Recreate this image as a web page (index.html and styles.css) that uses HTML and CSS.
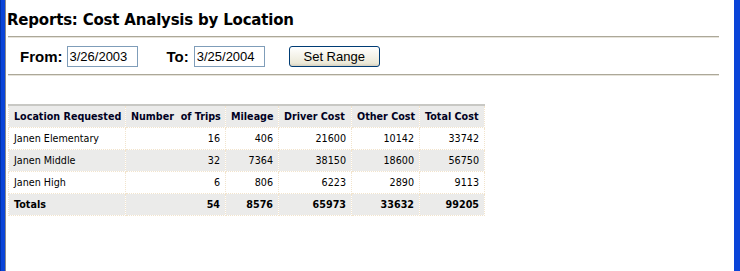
FILE: index.html
```html
<!DOCTYPE html>
<html>
<head>
<meta charset="utf-8">
<link rel="stylesheet" href="styles.css">
</head>
<body>
<div class="frame">
  <div class="page">
    <h1 class="title">Reports: Cost Analysis by Location</h1>
    <div class="rule"></div>
    <form class="range">
      <label class="lbl">From:</label>
      <input class="date" type="text" value="3/26/2003">
      <label class="lbl to">To:</label>
      <input class="date" type="text" value="3/25/2004">
      <button class="btn" type="button">Set Range</button>
    </form>
    <div class="rule"></div>
    <table class="report">
      <colgroup>
        <col class="c1"><col class="c2"><col class="c3"><col class="c4"><col class="c5"><col class="c6">
      </colgroup>
      <thead>
        <tr>
          <th>Location Requested</th>
          <th>Number&nbsp; of Trips</th>
          <th>Mileage</th>
          <th>Driver Cost</th>
          <th>Other Cost</th>
          <th>Total Cost</th>
        </tr>
      </thead>
      <tbody>
        <tr class="odd"><td>Janen Elementary</td><td class="n">16</td><td class="n">406</td><td class="n">21600</td><td class="n">10142</td><td class="n">33742</td></tr>
        <tr class="even"><td>Janen Middle</td><td class="n">32</td><td class="n">7364</td><td class="n">38150</td><td class="n">18600</td><td class="n">56750</td></tr>
        <tr class="odd"><td>Janen High</td><td class="n">6</td><td class="n">806</td><td class="n">6223</td><td class="n">2890</td><td class="n">9113</td></tr>
        <tr class="total"><td>Totals</td><td class="n">54</td><td class="n">8576</td><td class="n">65973</td><td class="n">33632</td><td class="n">99205</td></tr>
      </tbody>
    </table>
  </div>
</div>
</body>
</html>
```

FILE: styles.css
```css
html, body {
  margin: 0;
  padding: 0;
  background: #ffffff;
}
.frame {
  width: 740px;
  height: 271px;
  box-sizing: border-box;
  border-left: 1px solid #0030a8;
  border-right: 6px solid #0a44d8;
  display: flex;
}
.frame::before {
  content: "";
  width: 4px;
  background: #0a44d8;
  border-right: 1px solid #8a8a8a;
}
.page {
  flex: 1;
  padding: 0 15px 0 1px;
  font-family: "DejaVu Sans", Verdana, sans-serif;
}
.title {
  margin: 0;
  padding: 10px 0 0 0;
  height: 26px;
  font-size: 15px;
  font-weight: bold;
  letter-spacing: -0.2px;
  color: #000000;
  line-height: 20px;
}
.rule {
  height: 0;
  margin-left: 1px;
  border-top: 1px solid #aca899;
  border-bottom: 1px solid #e6e3da;
}
.range {
  display: flex;
  align-items: center;
  height: 36px;
  margin: 0;
  padding-left: 13px;
  font-family: "Liberation Sans", Arial, sans-serif;
}
.lbl {
  font-size: 15px;
  font-weight: bold;
  color: #000;
  margin-right: 4px;
}
.lbl.to {
  margin-left: 29px;
  margin-right: 5px;
}
.date {
  width: 71px;
  height: 21px;
  box-sizing: border-box;
  border: 1px solid #7f9db9;
  padding: 0 2px;
  font-family: "Liberation Sans", Arial, sans-serif;
  font-size: 13px;
  color: #000;
}
.btn {
  margin-left: 24px;
  width: 91px;
  height: 21px;
  box-sizing: border-box;
  border: 1px solid #003c74;
  border-radius: 3px;
  background: linear-gradient(#ffffff, #ece9d8 85%, #d6d0c0);
  font-family: "Liberation Sans", Arial, sans-serif;
  font-size: 13px;
  color: #000;
  padding: 0;
}
.report {
  margin-top: 28px;
  margin-left: 1px;
  border-collapse: collapse;
  table-layout: fixed;
  width: 476px;
  border-top: 2px solid #c8c8c4;
  font-size: 9.6px;
  color: #000000;
}
.report col.c1 { width: 117px; }
.report col.c2 { width: 100px; }
.report col.c3 { width: 53px; }
.report col.c4 { width: 73px; }
.report col.c5 { width: 68px; }
.report col.c6 { width: 65px; }
.report th, .report td {
  height: 21px;
  padding: 0 5px;
  border: 1px dotted #f2e4cc;
  white-space: nowrap;
  overflow: hidden;
}
.report th {
  background: #ebebea;
  color: #000022;
  text-align: left;
  font-weight: bold;
}
.report td.n { text-align: right; }
.report tr.odd td { background: #ffffff; }
.report tr.even td { background: #ebebea; }
.report tr.total td { background: #ebebea; font-weight: bold; }
```
